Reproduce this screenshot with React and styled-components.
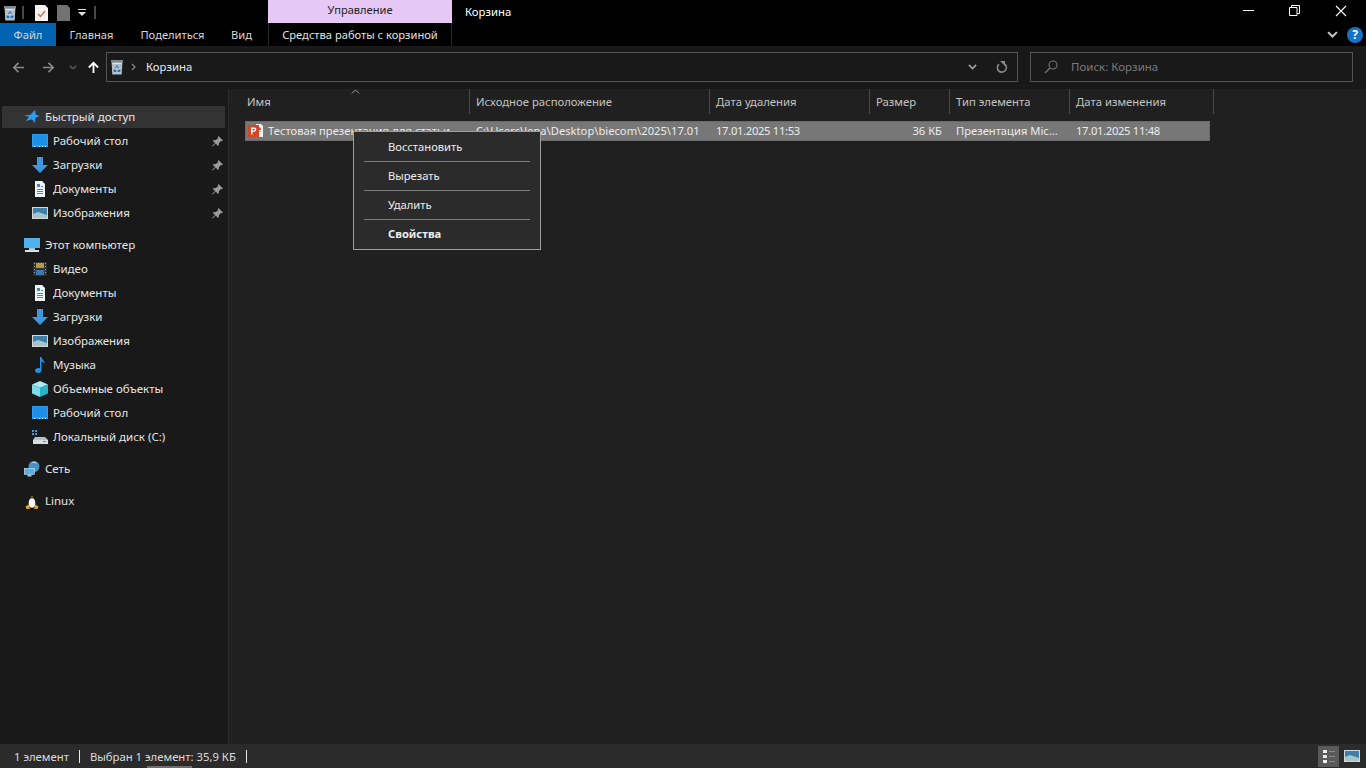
import React from "react";
import styled, { createGlobalStyle } from "styled-components";

const GlobalStyle = createGlobalStyle`
  html, body { margin: 0; padding: 0; background: #202020; }
  body { font-family: "Noto Sans", "Open Sans", sans-serif; font-size: 11.5px; color: #fff; overflow: hidden; }
  * { box-sizing: border-box; }
  svg { display: block; flex-shrink: 0; }
`;

const quickItems = [
  { icon: "desktop", label: "Рабочий стол" },
  { icon: "download", label: "Загрузки" },
  { icon: "document", label: "Документы" },
  { icon: "picture", label: "Изображения" },
];
const pcItems = [
  { icon: "video", label: "Видео" },
  { icon: "document", label: "Документы" },
  { icon: "download", label: "Загрузки" },
  { icon: "picture", label: "Изображения" },
  { icon: "music", label: "Музыка" },
  { icon: "cube", label: "Объемные объекты" },
  { icon: "desktop", label: "Рабочий стол" },
  { icon: "drive", label: "Локальный диск (C:)" },
];
const columns = [
  { label: "Имя", width: 230 },
  { label: "Исходное расположение", width: 240 },
  { label: "Дата удаления", width: 160 },
  { label: "Размер", width: 80 },
  { label: "Тип элемента", width: 120 },
  { label: "Дата изменения", width: 144 },
];
const menuItems = [
  { label: "Восстановить" },
  { label: "Вырезать" },
  { label: "Удалить" },
  { label: "Свойства", bold: true },
];

const RecycleIcon = () => (
  <svg width="14" height="16" viewBox="0 0 14 16">
    <path d="M1.500 2h11l-.8 13.500H2.300z" fill="#b4c0c8" />
    <path d="M1 1h12v2.500H1z" fill="#7f8a92" />
    <path d="M2.500 4h9v1h-9z" fill="#dfe5e9" />
    <path d="M7 6l2.200 3H8.300L7 7.400 5.700 9h-.9zM3.800 10.200l1 .6 1.500.1v2.100H4.100l-.8-1.500zM10.200 10.200l.5 1.300-.8 1.500H7.700v-2.100l1.500-.1z" fill="#1273c9" />
  </svg>
);

const icons = {
  desktop: (
    <svg width="16" height="16" viewBox="0 0 16 16">
      <rect y="1" width="16" height="13" fill="#2a9df4" />
      <rect x="1" y="2" width="14" height="10" fill="#1e8fe6" />
      <path d="M2 13h1v1H2zM7 13h1v1H7zM10 13h1v1h-1zM13 13h1v1h-1z" fill="#e8f4fd" />
    </svg>
  ),
  download: (
    <svg width="16" height="16" viewBox="0 0 16 16">
      <path d="M5 0h6v8h5l-8 8-8-8h5z" fill="#3f97e0" />
    </svg>
  ),
  document: (
    <svg width="16" height="16" viewBox="0 0 16 16">
      <path d="M3 0h7l3 3v13H3z" fill="#eef3f7" />
      <path d="M5 3h3v3H5zM9 5h2v1H9zM5 8h6v1H5zM5 10h6v1H5zM5 12h6v1H5z" fill="#4a86b8" />
    </svg>
  ),
  picture: (
    <svg width="16" height="16" viewBox="0 0 16 16">
      <rect y="2" width="16" height="12" fill="#d5d9dc" />
      <rect x="1" y="3" width="14" height="10" fill="#3f7ea8" />
      <path d="M1 9l5-2 9 3v3H1z" fill="#a9c4c9" />
    </svg>
  ),
  pc: (
    <svg width="16" height="16" viewBox="0 0 16 16">
      <rect y="1" width="16" height="10" fill="#4db2ee" />
      <rect x="5" y="11" width="6" height="2" fill="#a9c6d6" />
      <rect x="1" y="13" width="14" height="2" fill="#d9e4ea" />
    </svg>
  ),
  video: (
    <svg width="16" height="16" viewBox="0 0 16 16">
      <rect x="1" y="1" width="14" height="14" fill="#30343a" />
      <rect x="4" y="2" width="8" height="5" fill="#b79a3c" />
      <rect x="4" y="9" width="8" height="5" fill="#3d79b0" />
      <path d="M2 2h1v1H2zM2 5h1v1H2zM2 8h1v1H2zM2 11h1v1H2zM13 2h1v1h-1zM13 5h1v1h-1zM13 8h1v1h-1zM13 11h1v1h-1z" fill="#9aa3ab" />
    </svg>
  ),
  music: (
    <svg width="16" height="16" viewBox="0 0 16 16">
      <path d="M8 0h1.500c.3 2.500 3.500 3.500 3 7-.8-1.500-1.800-2.200-3-2.500V13c0 1.700-1.500 3-3.500 3S3 15 3 13.500 4.800 11 6.300 11c.6 0 1.200.1 1.700.4z" fill="#2a8fe0" />
    </svg>
  ),
  cube: (
    <svg width="16" height="16" viewBox="0 0 16 16">
      <path d="M8 0l8 3.500L8 7 0 3.500z" fill="#a8ecf2" />
      <path d="M0 3.500L8 7v9l-8-3.500z" fill="#7fdce6" />
      <path d="M16 3.500L8 7v9l8-3.500z" fill="#27b3c9" />
    </svg>
  ),
  drive: (
    <svg width="16" height="16" viewBox="0 0 16 16">
      <path d="M0 1h2v2H0zM3 1h2v2H3zM0 4h2v2H0zM3 4h2v2H3z" fill="#2a9df4" />
      <path d="M3 8h10l3 3H1z" fill="#b9bfc4" />
      <rect x="1" y="11" width="15" height="4" fill="#d9dde0" />
      <rect x="11" y="12" width="3" height="1" fill="#3bb54a" />
    </svg>
  ),
  network: (
    <svg width="16" height="16" viewBox="0 0 16 16">
      <circle cx="10" cy="5.500" r="5.500" fill="#4a8fc4" />
      <path d="M7 1.500c2-1.500 5-1 6 1-2-.6-4-.4-6-1z" fill="#b8dcf0" />
      <rect x=".3" y="7.300" width="10" height="6" fill="#4db2ee" stroke="#d5e6f0" strokeWidth=".6" />
      <rect x="3.500" y="13.500" width="4" height="2" fill="#a9c6d6" />
    </svg>
  ),
  linux: (
    <svg width="16" height="16" viewBox="0 0 16 16">
      <path d="M8 0c2 0 2.800 1.600 2.800 3.500S13 7.500 13 10.500 11 15 8 15s-5-1.500-5-4.500S5.200 5.400 5.200 3.500 6 0 8 0z" fill="#1c1c1c" />
      <ellipse cx="8" cy="10" rx="3.300" ry="4.800" fill="#f6f6f6" />
      <path d="M1.500 13.500l3-2 1.500 3.500-1 1H2.500zM14.500 13.500l-3-2L10 15l1 1h2.500z" fill="#e2a31d" />
      <path d="M6.800 3.500h2.400L8 5z" fill="#e2a31d" />
    </svg>
  ),
};

const Window = styled.div`
  width: 1366px;
  height: 768px;
  display: flex;
  flex-direction: column;
  position: relative;
  overflow: hidden;
`;

const TitleBar = styled.div`
  height: 23px;
  background: #000;
  display: flex;
`;

const QuickBar = styled.div`
  width: 268px;
  display: flex;
  align-items: center;
  padding: 2px 0 0 3px;
`;

const BarDivider = styled.span`
  width: 2px;
  height: 13px;
  background: #484848;
  margin: 0 ${(p) => p.$gap || 10}px;
`;

const ManageLabel = styled.div`
  width: 184px;
  background: #e6c8f6;
  color: #222;
  display: flex;
  align-items: center;
  justify-content: center;
  padding-bottom: 4px;
  font-size: 11.100px;
`;

const WindowTitle = styled.div`
  padding-left: 13px;
  line-height: 23px;
  font-size: 11.300px;
`;

const WindowControls = styled.div`
  margin-left: auto;
  display: flex;
  align-items: center;
  padding: 0 19px 2px 0;
  gap: 35px;
`;

const RibbonBar = styled.div`
  height: 23px;
  background: #000;
  display: flex;
  align-items: center;
`;

const RibbonTab = styled.div`
  height: 23px;
  width: ${(p) => p.$width}px;
  margin-left: ${(p) => p.$offset || 0}px;
  display: flex;
  align-items: center;
  justify-content: center;
  color: ${(p) => (p.$context ? "#e0e0e0" : "#d8d8d8")};
  background: ${(p) => (p.$active ? "#0063b1" : "transparent")};
  border-left: ${(p) => (p.$context ? "1px solid #2b2b2b" : "none")};
  border-right: ${(p) => (p.$context ? "1px solid #2b2b2b" : "none")};
  padding-bottom: 1px;
  font-size: 11.150px;
`;

const RibbonRight = styled.div`
  margin-left: auto;
  display: flex;
  align-items: center;
  gap: 9px;
  padding-right: 3px;
`;

const HelpBadge = styled.div`
  width: 16px;
  height: 16px;
  border-radius: 50%;
  background: #1572c8;
  color: #fff;
  font-weight: 700;
  font-size: 12px;
  line-height: 16px;
  text-align: center;
`;

const NavBar = styled.div`
  height: 43px;
  background: #191919;
  display: flex;
  align-items: center;
  padding: 0 13px 1px 12px;
`;

const NavButtons = styled.div`
  width: 94px;
  display: flex;
  align-items: center;
`;

const NavSlot = styled.div`
  width: ${(p) => p.$width}px;
  display: flex;
`;

const AddressBox = styled.div`
  width: 912px;
  height: 30px;
  border: 1px solid #555;
  display: flex;
  align-items: center;
  padding-left: 3px;
  color: #e8e8e8;
`;

const AddressText = styled.span`
  margin-left: 9px;
  font-size: 11.300px;
  padding-bottom: 1px;
`;

const AddressTools = styled.div`
  margin-left: auto;
  display: flex;
  align-items: center;
  height: 100%;
`;

const ToolSlot = styled.div`
  width: 30px;
  height: 100%;
  display: flex;
  align-items: center;
  justify-content: center;
`;

const SearchBox = styled.div`
  width: 323px;
  height: 30px;
  margin-left: 12px;
  border: 1px solid #555;
  display: flex;
  align-items: center;
  padding-left: 13px;
  gap: 13px;
  color: #7a7a7a;
  span {
    padding-bottom: 1px;
  }
`;

const Main = styled.div`
  flex: 1;
  display: flex;
  min-height: 0;
`;

const Sidebar = styled.div`
  width: 229px;
  background: #191919;
  border-right: 1px solid #2b2b2b;
  padding: 17px 3px 0 2px;
  display: flex;
  flex-direction: column;
`;

const NavGroup = styled.div`
  display: flex;
  flex-direction: column;
  margin-bottom: 8px;
`;

const NavRow = styled.div`
  display: flex;
  align-items: center;
  padding-left: ${(p) => (p.$child ? 30 : 22)}px;
  gap: 5px;
  color: #e6e6e6;
  background: ${(p) => (p.$active ? "#333" : "transparent")};
  height: ${(p) => (p.$active ? "22px" : "24px")};
  margin: ${(p) => (p.$active ? "0 0 1px" : "0")};
  span {
    padding-bottom: 2px;
  }
`;

const PinMark = styled.div`
  margin-left: auto;
  margin-right: 2px;
`;

const Content = styled.div`
  flex: 1;
  background: #202020;
  padding-left: 11px;
`;

const HeaderRow = styled.div`
  height: 25px;
  display: flex;
  position: relative;
`;

const HeaderCell = styled.div`
  width: ${(p) => p.$width}px;
  height: 25px;
  padding-left: 6px;
  border-right: 1px solid #4a4a4a;
  display: flex;
  align-items: center;
  color: #c4c4c4;
  font-size: 11.300px;
  &:first-child {
    padding-left: 7px;
  }
`;

const SortCaret = styled.div`
  position: absolute;
  left: 111px;
  top: 0;
`;

const FileRow = styled.div`
  margin: 7px 0 0 5px;
  width: 965px;
  height: 20px;
  background: #777;
  border: 1px solid #6a6a6a;
  display: flex;
  align-items: center;
  color: #ececec;
  font-size: 11.200px;
`;

const FileCell = styled.div`
  width: ${(p) => p.$width}px;
  padding-left: ${(p) => p.$pad ?? 7}px;
  padding-right: ${(p) => (p.$right ? 7 : 0)}px;
  padding-bottom: 1px;
  white-space: nowrap;
  display: flex;
  align-items: center;
  justify-content: ${(p) => (p.$right ? "flex-end" : "flex-start")};
  letter-spacing: ${(p) => (p.$date ? "-0.3px" : "normal")};
  gap: 4px;
`;

const ContextMenu = styled.div`
  position: absolute;
  left: 353px;
  top: 131px;
  width: 188px;
  height: 119px;
  background: #2b2b2b;
  border: 1px solid #a0a0a0;
  padding: 1px 10px 0;
  z-index: 2;
`;

const MenuItem = styled.div`
  height: 26px;
  padding-left: 24px;
  display: flex;
  align-items: center;
  color: #eee;
  font-size: 11.200px;
  font-weight: ${(p) => (p.$bold ? 700 : 400)};
`;

const MenuSeparator = styled.div`
  height: 1px;
  background: #7d7d7d;
  margin-top: 2px;
`;

const StatusBar = styled.div`
  height: 24px;
  background: #2b2b2b;
  display: flex;
  align-items: center;
  padding: 0 8px 0 14px;
  color: #dcdcdc;
  font-size: 11.300px;
  position: relative;
`;

const StatusSep = styled.span`
  width: 1px;
  height: 13px;
  background: #e8e8e8;
  margin: 0 10px;
`;

const ScrollStub = styled.div`
  position: absolute;
  left: 147px;
  bottom: 0;
  width: 45px;
  height: 2px;
  background: #6e6e6e;
`;

const ViewButtons = styled.div`
  margin-left: auto;
  display: flex;
  align-items: center;
  gap: 5px;
`;

const ViewButton = styled.div`
  width: 21px;
  height: 21px;
  background: ${(p) => (p.$active ? "#5a5a5a" : "transparent")};
  display: flex;
  align-items: center;
  justify-content: center;
`;

const ViewPlain = styled.div`
  width: 14px;
  height: 21px;
  display: flex;
  align-items: center;
`;

const PptIcon = () => (
  <svg width="16" height="16" viewBox="0 0 16 16">
    <path d="M8 1h5l2 2v11H8z" fill="#f2f2f2" />
    <path d="M10 4a3 3 0 0 1 3 3h-3z" fill="#d24726" />
    <rect x="10" y="8" width="3" height="1" fill="#e8a08c" />
    <rect y="2" width="11" height="12" fill="#d24726" />
    <path d="M3 4.500h3c1.500 0 2.300.9 2.300 2.100S7.500 8.700 6 8.700H4.500v2.800H3zm1.500 1.200v1.800H6c.5 0 .8-.4.800-.9s-.3-.9-.8-.9z" fill="#fff" />
  </svg>
);

const Pin = () => (
  <svg width="11" height="11" viewBox="0 0 11 11">
    <path d="M6.500 0L11 4.500 9.800 5.200 8.800 5 6.800 7.500 6.800 9.200 6 10 3.600 7.400.7 10.600 0 10 3 7 .8 4.800 1.700 4 3.500 4.200 6 2.200 5.800 1z" fill="#9a9a9a" />
  </svg>
);

const Chevron = ({ color = "#9a9a9a", size = 10, up }) => (
  <svg width={size} height={size * 0.6} viewBox="0 0 10 6">
    <path d={up ? "M1 5l4-4 4 4" : "M1 1l4 4 4-4"} fill="none" stroke={color} strokeWidth={up ? 1 : 1.800} />
  </svg>
);

const ArrowIcon = ({ dir, color, weight = 1.800 }) => (
  <svg width="13" height="13" viewBox="0 0 14 14" style={{ transform: `rotate(${dir}deg)` }}>
    <path d="M13 7H2M7 2L2 7l5 5" fill="none" stroke={color} strokeWidth={weight} />
  </svg>
);

const SideRow = ({ icon, label, child, pinned }) => (
  <NavRow $child={child}>
    {icons[icon]}
    <span>{label}</span>
    {pinned && (
      <PinMark>
        <Pin />
      </PinMark>
    )}
  </NavRow>
);

const StarIcon = () => (
  <svg width="16" height="16" viewBox="0 0 16 16">
    <path d="M11 1l.6 4.600L15.500 7l-4 1.800L11 14 8 10.300 2 12l3-4.200L0 6.500l6.500-.8z" fill="#2a9df4" />
  </svg>
);

export default function App() {
  return (
    <Window>
      <GlobalStyle />
      <TitleBar>
        <QuickBar>
          <RecycleIcon />
          <BarDivider $gap={5} />
          <svg width="13" height="16" viewBox="0 0 13 16" style={{ marginLeft: 6 }}>
            <path d="M0 0h10l3 3v13H0z" fill="#f4f4f4" />
            <path d="M3 9l2.500 2.500L10 6" fill="none" stroke="#d9682a" strokeWidth="1.200" />
          </svg>
          <svg width="13" height="16" viewBox="0 0 13 16" style={{ marginLeft: 9 }}>
            <path d="M0 0h10l3 3v13H0z" fill="#727272" />
          </svg>
          <svg width="8" height="7" viewBox="0 0 8 7" style={{ marginLeft: 8 }}>
            <path d="M0 0h8v1H0zM0 3h8L4 7z" fill="#e0e0e0" />
          </svg>
          <BarDivider $gap={8} />
        </QuickBar>
        <ManageLabel>Управление</ManageLabel>
        <WindowTitle>Корзина</WindowTitle>
        <WindowControls>
          <svg width="11" height="2" viewBox="0 0 11 2">
            <rect width="11" height="1" fill="#fff" />
          </svg>
          <svg width="11" height="11" viewBox="0 0 11 11">
            <path d="M.5 2.500h7.500v8H.5zM2.500 2.500V.5h8v8H8" fill="none" stroke="#fff" />
          </svg>
          <svg width="12" height="12" viewBox="0 0 12 12">
            <path d="M1 1l10 10M11 1L1 11" stroke="#fff" strokeWidth="1.100" />
          </svg>
        </WindowControls>
      </TitleBar>

      <RibbonBar>
        <RibbonTab $width={56} $active>Файл</RibbonTab>
        <RibbonTab $width={71}>Главная</RibbonTab>
        <RibbonTab $width={91}>Поделиться</RibbonTab>
        <RibbonTab $width={47}>Вид</RibbonTab>
        <RibbonTab $width={184} $offset={3} $context>Средства работы с корзиной</RibbonTab>
        <RibbonRight>
          <Chevron color="#c8c8c8" size={11} />
          <HelpBadge>?</HelpBadge>
        </RibbonRight>
      </RibbonBar>

      <NavBar>
        <NavButtons>
          <NavSlot $width={30}><ArrowIcon dir={0} color="#8a8a8a" /></NavSlot>
          <NavSlot $width={27}><ArrowIcon dir={180} color="#8a8a8a" /></NavSlot>
          <NavSlot $width={18}><Chevron color="#5c5c5c" size={8} /></NavSlot>
          <NavSlot $width={19}><ArrowIcon dir={90} color="#fff" weight={2} /></NavSlot>
        </NavButtons>
        <AddressBox>
          <RecycleIcon />
          <svg width="6" height="8" viewBox="0 0 6 8" style={{ marginLeft: 7 }}>
            <path d="M1 1l3 3-3 3" fill="none" stroke="#8a8a8a" strokeWidth="1.200" />
          </svg>
          <AddressText>Корзина</AddressText>
          <AddressTools>
            <ToolSlot><Chevron color="#a0a0a0" size={9} /></ToolSlot>
            <ToolSlot>
              <svg width="12" height="13" viewBox="0 0 12 13">
                <path d="M8.500 3A4.500 4.500 0 1 1 3 3.200" fill="none" stroke="#8a8a8a" strokeWidth="1.600" />
                <path d="M3 0l5 0 0 5z" fill="#8a8a8a" transform="translate(1 0)" />
              </svg>
            </ToolSlot>
          </AddressTools>
        </AddressBox>
        <SearchBox>
          <svg width="14" height="14" viewBox="0 0 14 14">
            <circle cx="9" cy="5" r="4" fill="none" stroke="#777" strokeWidth="1.100" />
            <path d="M6 8l-5 5" stroke="#777" strokeWidth="1.200" />
          </svg>
          <span>Поиск: Корзина</span>
        </SearchBox>
      </NavBar>

      <Main>
        <Sidebar>
          <NavGroup>
            <NavRow $active>
              <StarIcon />
              <span>Быстрый доступ</span>
            </NavRow>
            {quickItems.map((item) => (
              <SideRow key={item.label} icon={item.icon} label={item.label} child pinned />
            ))}
          </NavGroup>
          <NavGroup>
            <SideRow icon="pc" label="Этот компьютер" />
            {pcItems.map((item) => (
              <SideRow key={item.label + item.icon} icon={item.icon} label={item.label} child />
            ))}
          </NavGroup>
          <NavGroup>
            <SideRow icon="network" label="Сеть" />
          </NavGroup>
          <NavGroup>
            <SideRow icon="linux" label="Linux" />
          </NavGroup>
        </Sidebar>

        <Content>
          <HeaderRow>
            {columns.map((col) => (
              <HeaderCell key={col.label} $width={col.width}>{col.label}</HeaderCell>
            ))}
            <SortCaret><Chevron color="#b0b0b0" size={9} up /></SortCaret>
          </HeaderRow>
          <FileRow>
            <FileCell $width={223} $pad={2}>
              <PptIcon />
              <span>Тестовая презентация для статьи</span>
            </FileCell>
            <FileCell $width={240}>C:\Users\lena\Desktop\biecom\2025\17.01</FileCell>
            <FileCell $width={160} $date>17.01.2025 11:53</FileCell>
            <FileCell $width={80} $right>36 КБ</FileCell>
            <FileCell $width={120}>Презентация Mic...</FileCell>
            <FileCell $width={140} $date>17.01.2025 11:48</FileCell>
          </FileRow>
        </Content>
      </Main>

      <ContextMenu>
        {menuItems.map((item, i) => (
          <React.Fragment key={item.label}>
            <MenuItem $bold={item.bold}>{item.label}</MenuItem>
            {i < menuItems.length - 1 && <MenuSeparator />}
          </React.Fragment>
        ))}
      </ContextMenu>

      <StatusBar>
        <span>1 элемент</span>
        <StatusSep />
        <span>Выбран 1 элемент: 35,9 КБ</span>
        <StatusSep />
        <ScrollStub />
        <ViewButtons>
          <ViewButton $active>
            <svg width="15" height="15" viewBox="0 0 15 15">
              <path d="M2 1h4v3H2zM2 6h4v3H2zM2 11h4v3H2z" fill="#eee" />
              <path d="M8 2h6v1H8zM8 7h6v1H8zM8 12h6v1H8z" fill="#8a8a8a" />
            </svg>
          </ViewButton>
          <ViewPlain>{icons.picture}</ViewPlain>
        </ViewButtons>
      </StatusBar>
    </Window>
  );
}
